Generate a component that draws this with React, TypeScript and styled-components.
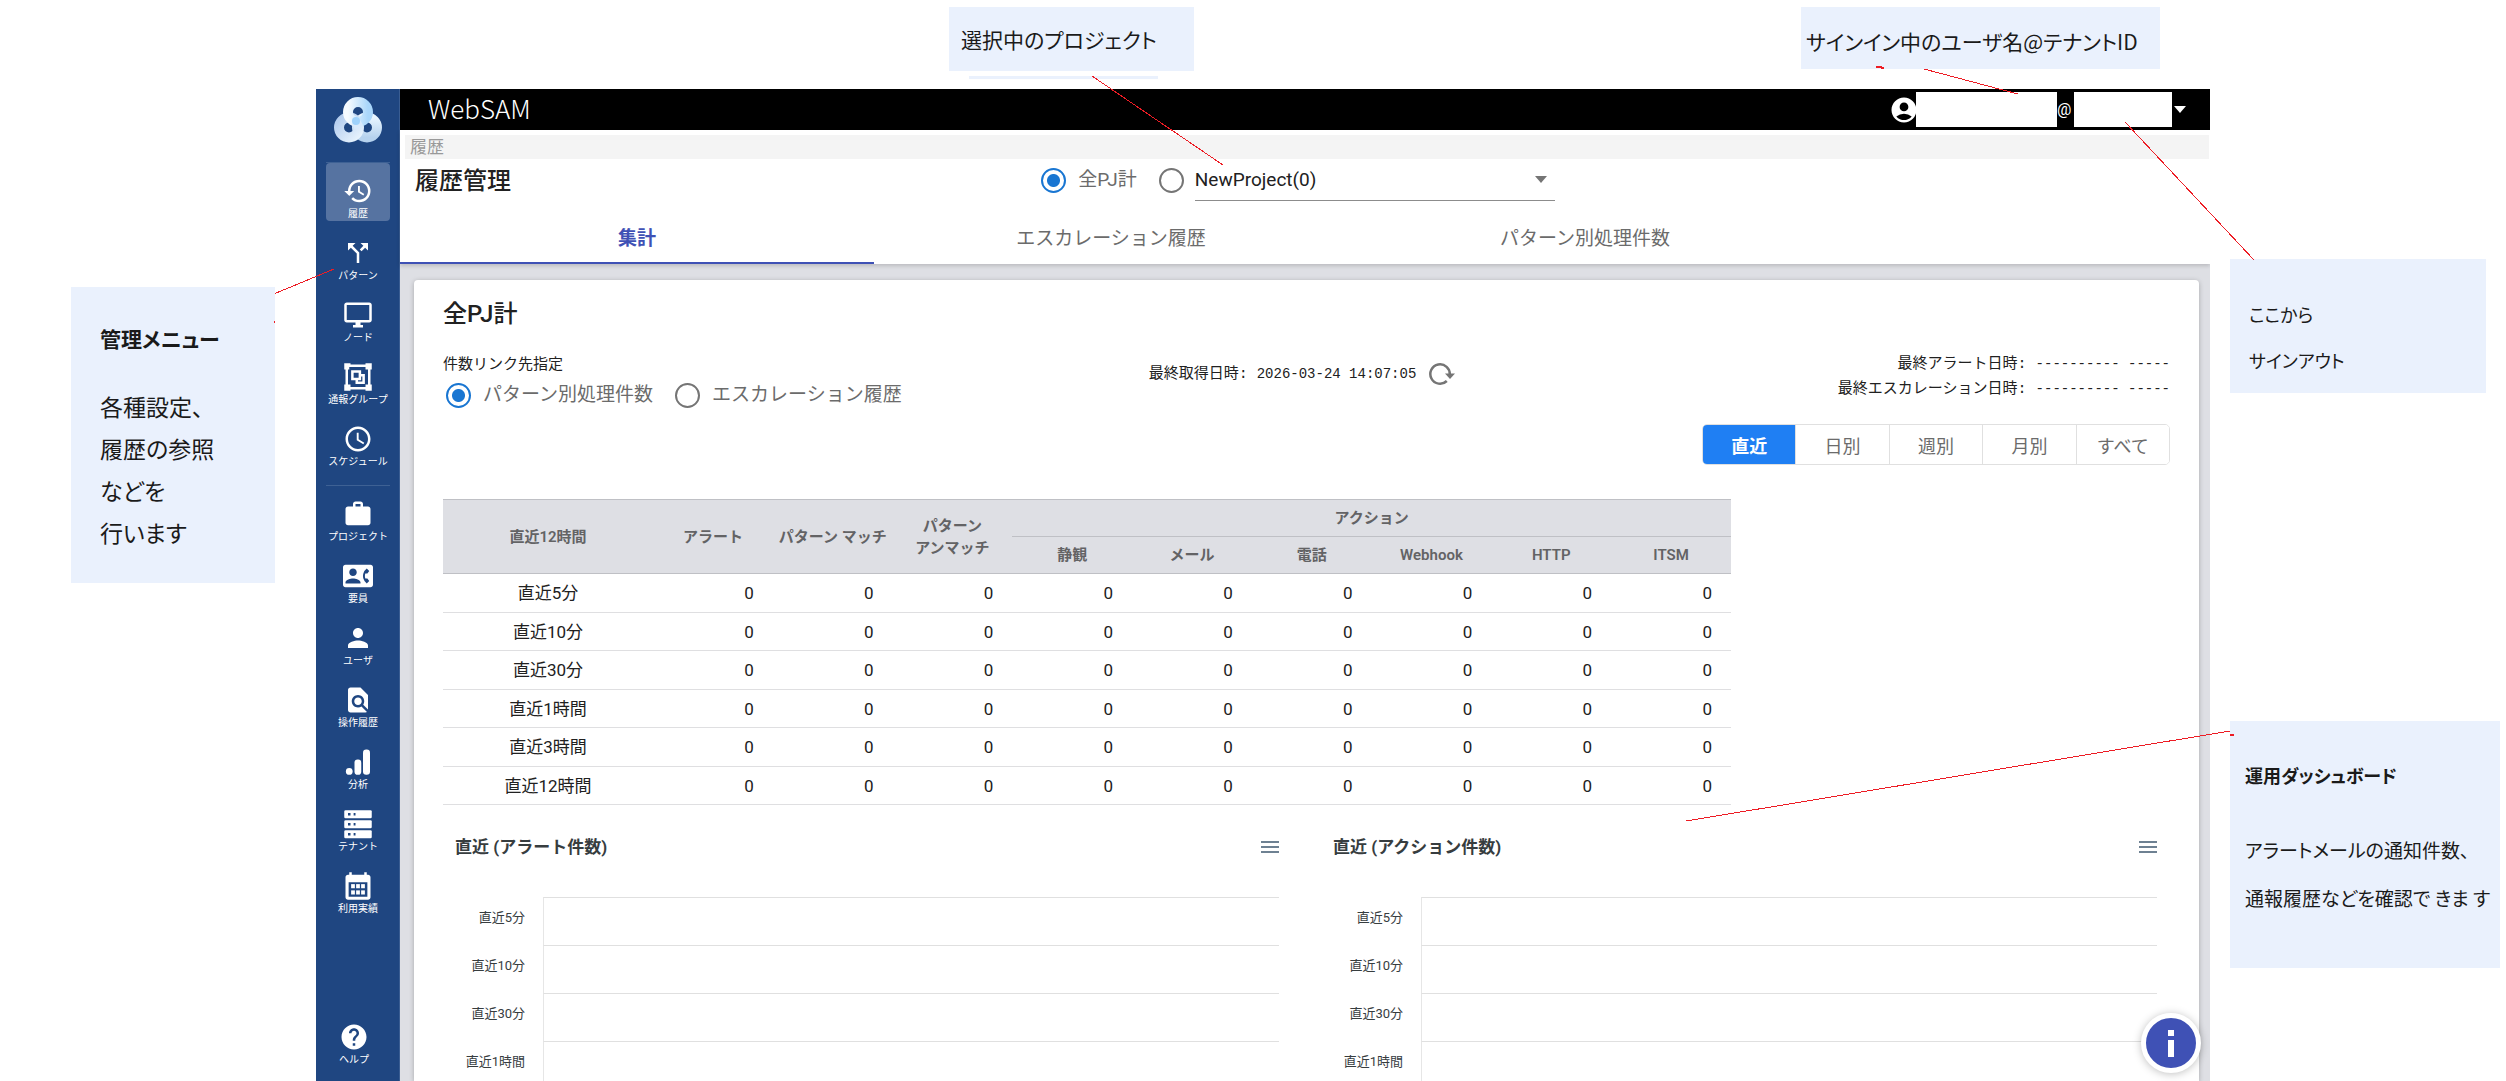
import React, { useState } from 'react';
import styled, { createGlobalStyle, css } from 'styled-components';
import {
  MdAccessTime,
  MdAccountCircle,
  MdCallSplit,
  MdContactPhone,
  MdFindInPage,
  MdHelp,
  MdHistory,
  MdOutlineDesktopWindows,
  MdPerson,
  MdWork,
} from 'react-icons/md';

const sans = "Roboto, 'Noto Sans CJK JP', sans-serif";
const mono = "'Liberation Mono', 'Noto Sans CJK JP', monospace";
const notes = "'Noto Sans CJK JP', sans-serif";

const color = {
  navy: '#1f4681',
  indigo: '#3f51b5',
  blue: '#1976d2',
  toggle: '#1f7ff3',
  panel: '#dedfe4',
  text: '#212121',
  muted: '#6b6b6b',
  note: '#eaf1fd',
  red: '#ed1c24',
};

const GlobalStyle = createGlobalStyle`
  *, *::before, *::after { box-sizing: border-box; }
  body { margin: 0; background: #fff; color: ${color.text}; font-family: ${sans}; }
  button, select, input { font-family: inherit; margin: 0; }
  h1, h2, h3, p, fieldset, ul { margin: 0; padding: 0; border: 0; }
`;

/* ---------- page frame and notes ---------- */

const Page = styled.div`
  position: relative;
  display: grid;
  grid-template-columns: 316px minmax(0, 1fr) 296px;
  grid-template-rows: 89px minmax(0, 1fr);
  height: 100vh;
  overflow: hidden;
`;

const TopNotes = styled.div`
  grid-column: 2 / 4;
  display: flex;
  align-items: flex-start;
  gap: 607px;
  padding: 7px 0 0 633px;
`;

const LeftNotes = styled.aside`
  padding: 198px 0 0 71px;
`;

const RightNotes = styled.aside`
  display: flex;
  flex-direction: column;
  gap: 328px;
  padding: 170px 0 0 20px;
`;

const Note = styled.section<{ $w: number; $h: number; $pad: string; $size?: number; $line?: number }>`
  flex: none;
  width: ${(p) => p.$w}px;
  height: ${(p) => p.$h}px;
  padding: ${(p) => p.$pad};
  background: ${color.note};
  color: #1a1a1a;
  font-family: ${notes};
  font-size: ${(p) => p.$size ?? 21}px;
  line-height: ${(p) => p.$line ?? 42}px;
  font-feature-settings: 'palt';
  white-space: nowrap;
`;

const NoteTitle = styled.h2<{ $gap: number; $size: number }>`
  margin-bottom: ${(p) => p.$gap}px;
  font-size: ${(p) => p.$size}px;
  font-weight: 700;
`;

const Connectors = styled.svg`
  position: absolute;
  inset: 0;
  width: 100%;
  height: 100%;
  pointer-events: none;
`;

/* ---------- application shell ---------- */

const Shell = styled.div`
  position: relative;
  display: grid;
  grid-template-columns: 84px minmax(0, 1fr);
  min-height: 0;
  overflow: hidden;
`;

const Sidebar = styled.nav`
  display: flex;
  flex-direction: column;
  padding: 0 9px 14px 10px;
  background: ${color.navy};
  border-right: 1px solid #3a5d92;
`;

const LogoBox = styled.div`
  height: 73px;
  padding-top: 7px;
  text-align: center;
`;

const Rule = styled.hr<{ $top?: number }>`
  width: 100%;
  height: 1px;
  margin: ${(p) => p.$top ?? 0}px 0 0;
  border: 0;
  background: #3e6194;
`;

const NavList = styled.ul`
  display: grid;
  gap: 4px;
  list-style: none;
`;

const NavButton = styled.button<{ $active?: boolean }>`
  display: flex;
  flex-direction: column;
  align-items: center;
  width: 100%;
  height: 58px;
  padding: 13px 0 0;
  border: 0;
  border-radius: 4px;
  background: ${(p) => (p.$active ? '#5673a1' : 'transparent')};
  color: #fff;
  font-size: 10px;
  line-height: 15px;
  white-space: nowrap;
  cursor: pointer;
`;

const HelpSlot = styled.div`
  margin-top: auto;
  padding-right: 8px;
`;

const Main = styled.div`
  display: flex;
  flex-direction: column;
  min-height: 0;
`;

const TopBar = styled.header`
  flex: none;
  display: flex;
  align-items: center;
  justify-content: space-between;
  height: 41px;
  padding: 0 24px 0 28px;
  background: #000;
  color: #fff;
`;

const Brand = styled.div`
  padding-bottom: 4px;
  font-family: ${notes};
  font-size: 26px;
  font-weight: 300;
  line-height: 36px;
`;

const UserButton = styled.button`
  display: flex;
  align-items: center;
  padding: 0;
  border: 0;
  background: none;
  color: #fff;
  font-size: 16px;
  cursor: pointer;
`;

const Blank = styled.span<{ $w: number }>`
  width: ${(p) => p.$w}px;
  height: 35px;
  background: #fff;
  svg + & { margin-left: -3px; }
`;

const At = styled.span`
  width: 17px;
  text-align: left;
`;

const Caret = styled.span`
  margin-left: 2px;
  border: 6px solid transparent;
  border-top: 7px solid currentColor;
  border-bottom: 0;
`;

const PageHead = styled.div`
  position: relative;
  flex: none;
  padding-top: 5px;
  background: #fff;
  box-shadow: 0 2px 4px rgba(0, 0, 0, 0.16);
`;

const Crumbs = styled.nav`
  margin: 0 1px 0 5px;
  padding-left: 5px;
  background: #f4f4f4;
  color: #999;
  font-size: 17px;
  line-height: 24px;
`;

const TitleRow = styled.div`
  display: grid;
  grid-template-columns: 1fr auto 1fr;
  align-items: center;
  height: 44px;
  padding: 0 15px;
`;

const PageTitle = styled.h1`
  font-size: 24px;
  font-weight: 500;
  line-height: 40px;
`;

const Scope = styled.fieldset`
  display: flex;
  align-items: center;
  align-self: start;
  padding-right: 14px;
`;

const RadioLabel = styled.label`
  display: flex;
  align-items: center;
  gap: 12px;
  margin-right: 22px;
  color: ${color.muted};
  font-size: 19px;
  line-height: 38px;
  white-space: nowrap;
`;

const Radio = styled.input.attrs({ type: 'radio' })`
  appearance: none;
  flex: none;
  width: 25px;
  height: 25px;
  border: 2px solid #757575;
  border-radius: 50%;
  &:checked {
    border-color: ${color.blue};
    background: radial-gradient(circle, ${color.blue} 6px, transparent 7px);
  }
`;

const SelectBox = styled.div`
  position: relative;
  width: 360px;
  margin-left: 11px;
  color: #757575;
  border-bottom: 1px solid #8c8c8c;
`;

const Select = styled.select`
  appearance: none;
  display: block;
  width: 100%;
  height: 41px;
  padding: 0;
  border: 0;
  background: none;
  color: ${color.text};
  font-size: 19px;
`;

const SelectCaret = styled(Caret)`
  position: absolute;
  top: 17px;
  right: 8px;
  pointer-events: none;
`;

const Tabs = styled.div`
  display: grid;
  grid-template-columns: repeat(3, minmax(0, 474px));
  margin-top: 8px;
`;

const Tab = styled.button<{ $active: boolean }>`
  height: 53px;
  padding: 0;
  border: 0;
  border-bottom: 2px solid ${(p) => (p.$active ? color.indigo : 'transparent')};
  background: none;
  color: ${(p) => (p.$active ? color.indigo : color.muted)};
  font-size: 19px;
  font-weight: ${(p) => (p.$active ? 700 : 400)};
  cursor: pointer;
`;

const Content = styled.main`
  flex: 1;
  min-height: 0;
  padding: 16px 11px 0 14px;
  background: ${color.panel};
`;

const Card = styled.section`
  height: 100%;
  padding: 18px 0 0 29px;
  overflow: hidden;
  border-radius: 4px 4px 0 0;
  background: #fff;
  box-shadow: 0 1px 5px rgba(0, 0, 0, 0.25);
`;

const Summary = styled.div`
  padding-right: 29px;
`;

const CardTitle = styled.h2`
  margin-bottom: 22px;
  font-size: 24px;
  font-weight: 500;
  line-height: 32px;
`;

const InfoRow = styled.div`
  display: grid;
  grid-template-columns: 1fr auto 1fr;
  align-items: start;
  font-size: 15px;
  line-height: 24px;
`;

const LinkTarget = styled.fieldset`
  min-width: 0;
  legend { padding: 0; }
`;

const RadioRow = styled.div`
  display: flex;
  padding-left: 3px;
`;

const Fetched = styled.div`
  display: flex;
  align-items: center;
  gap: 12px;
  height: 44px;
  padding-right: 8px;
  font-family: ${mono};
`;

const Stamp = styled.time`
  font-size: 14px;
`;

const LastTimes = styled.div`
  text-align: right;
  font-family: ${mono};
`;

const IconButton = styled.button`
  display: flex;
  padding: 0;
  border: 0;
  background: none;
  color: #757575;
  cursor: pointer;
`;

const Toggle = styled.div`
  display: flex;
  width: 468px;
  height: 41px;
  margin: 10px 0 0 auto;
  overflow: hidden;
  border: 1px solid #e0e0e0;
  border-radius: 5px;
`;

const ToggleButton = styled.button<{ $active: boolean }>`
  flex: 1;
  padding: 0;
  border: 0;
  border-left: 1px solid #e0e0e0;
  background: #fff;
  color: ${color.muted};
  font-size: 18px;
  cursor: pointer;
  &:first-child { border-left: 0; }
  ${(p) =>
    p.$active &&
    css`
      background: ${color.toggle};
      color: #fff;
      font-weight: 700;
    `}
`;

/* ---------- table ---------- */

const Table = styled.table`
  width: 1288px;
  max-width: 100%;
  margin-top: 34px;
  border-collapse: collapse;
  table-layout: fixed;
  font-size: 17px;
  line-height: 22px;
`;

const HeadCell = styled.th`
  height: 37px;
  padding: 0;
  border-top: 1px solid #bfc0c5;
  border-bottom: 1px solid #bfc0c5;
  background: ${color.panel};
  color: #636365;
  font-size: 15px;
  font-weight: 600;
`;

const BodyRow = styled.tr`
  height: 38px;
  border-bottom: 1px solid #dfdfe1;
  &:nth-child(odd) { height: 39px; }
`;

const RowHead = styled.th`
  padding: 0;
  font-weight: 400;
`;

const Num = styled.td`
  padding: 0 19px 0 0;
  text-align: right;
`;

/* ---------- charts ---------- */

const Charts = styled.div`
  display: grid;
  grid-template-columns: 1fr 1fr;
  margin-top: 30px;
`;

const ChartBox = styled.section`
  padding: 0 42px 0 12px;
`;

const ChartHead = styled.div`
  display: flex;
  align-items: center;
  justify-content: space-between;
  margin-bottom: 38px;
`;

const ChartTitle = styled.h3`
  color: #373d3f;
  font-size: 17px;
  font-weight: 700;
  line-height: 24px;
`;

const ChartRow = styled.div`
  display: grid;
  grid-template-columns: 70px 1fr;
  gap: 18px;
  height: 48px;
  color: #373d3f;
  font-size: 13px;
  line-height: 42px;
  text-align: right;
`;

const Band = styled.div`
  border-top: 1px solid #e0e0e0;
  border-left: 1px solid #e6e6e6;
`;

const InfoButton = styled.button`
  position: absolute;
  right: 9px;
  bottom: 8px;
  display: grid;
  place-items: center;
  width: 60px;
  height: 60px;
  padding: 0;
  border: 5px solid #fff;
  border-radius: 50%;
  background: ${color.indigo};
  box-shadow: 0 1px 8px rgba(0, 0, 0, 0.25);
  cursor: pointer;
`;

/* ---------- drawings ---------- */

const Logo = () => (
  <svg width="48" height="48" viewBox="0 0 48 48" fill="none" role="img" aria-label="WebSAM">
    <defs>
      <linearGradient id="lgA" x1="0" y1="0" x2="1" y2="1">
        <stop offset="0" stopColor="#b4cdee" />
        <stop offset="1" stopColor="#e6f2fd" />
      </linearGradient>
      <linearGradient id="lgB" x1="0" y1="0" x2="0" y2="1">
        <stop offset="0" stopColor="#e8f5ff" />
        <stop offset="1" stopColor="#b6d2ee" />
      </linearGradient>
      <linearGradient id="lgC" x1="0" y1="0" x2="1" y2="0">
        <stop offset="0" stopColor="#f6fbff" />
        <stop offset="1" stopColor="#a9d6fa" />
      </linearGradient>
    </defs>
    <circle cx="33" cy="31.500" r="10" stroke="url(#lgB)" strokeWidth="10" />
    <circle cx="15" cy="31.500" r="10" stroke="url(#lgA)" strokeWidth="10" />
    <circle cx="24" cy="16" r="10" stroke="url(#lgC)" strokeWidth="10" />
    <path d="M19.500 25 A10 10 0 0 1 25 32" stroke="#d9eafb" strokeWidth="9" />
    <circle cx="22" cy="25" r="4" fill="#9fd2fb" />
  </svg>
);

const GroupIcon = () => (
  <svg width="30" height="30" viewBox="0 0 24 24" fill="currentColor">
    <path
      fillRule="evenodd"
      d="M1 1h5v1h12V1h5v5h-1v12h1v5h-5v-1H6v1H1v-5h1V6H1V1zm4 3v2H4v12h2v2h12v-2h2V6h-2V4H5z"
    />
    <path fillRule="evenodd" d="M6.500 6.500h8v3h3v8H10v-3H6.500v-8zm2 2v4h4v-4h-4zm6 3v3H12v1h3.500v-4h-1z" />
  </svg>
);

const AnalyticsIcon = () => (
  <svg width="30" height="30" viewBox="0 0 24 24" fill="currentColor">
    <circle cx="5" cy="19.500" r="2.700" />
    <rect x="9.200" y="10" width="5.400" height="12.200" rx="2.500" />
    <rect x="16" y="2" width="5.600" height="20.200" rx="2.600" />
  </svg>
);

const ServerIcon = () => (
  <svg width="30" height="30" viewBox="0 0 24 24" fill="currentColor">
    {[1, 9, 17].map((y) => (
      <React.Fragment key={y}>
        <rect x="1" y={y} width="22" height="6.300" rx="1" />
        <rect x="4" y={y + 2.2} width="2" height="2" fill={color.navy} />
        <rect x="8.500" y={y + 2.2} width="1.500" height="2" fill={color.navy} />
      </React.Fragment>
    ))}
  </svg>
);

const CalendarIcon = () => (
  <svg width="30" height="30" viewBox="0 0 24 24" fill="currentColor">
    <path
      fillRule="evenodd"
      d="M5 1h2v2h10V1h2v2h1c1.100 0 2 .9 2 2v16c0 1.100-.9 2-2 2H4c-1.100 0-2-.9-2-2V5c0-1.100.9-2 2-2h1V1zM4.500 9v11.500h15V9h-15z"
    />
    {[10.5, 15.5].map((y) =>
      [6.5, 10.5, 14.5].map((x) => <rect key={`${x}-${y}`} x={x} y={y} width="3" height="3.300" />),
    )}
  </svg>
);

const RefreshIcon = () => (
  <svg width="28" height="26" viewBox="0 0 28 26" fill="none" stroke="currentColor" strokeWidth="2.500">
    <path d="M21.700 14 A9.700 9.700 0 1 0 18.800 20" />
    <path d="M17 12.500 h10 l-5 5.500 z" fill="currentColor" stroke="none" />
  </svg>
);

const MenuIcon = () => (
  <svg width="18" height="14" viewBox="0 0 18 14" fill="#6e8192">
    <rect y="1" width="18" height="2" />
    <rect y="6" width="18" height="2" />
    <rect y="11" width="18" height="2" />
  </svg>
);

const InfoMark = () => (
  <svg width="6" height="27" viewBox="0 0 6 27" fill="#fff">
    <rect width="6" height="6" />
    <rect y="10" width="6" height="17" />
  </svg>
);

/* ---------- data ---------- */

const mainNav = [
  { label: '履歴', icon: <MdHistory size={30} /> },
  { label: 'パターン', icon: <MdCallSplit size={30} /> },
  { label: 'ノード', icon: <MdOutlineDesktopWindows size={30} /> },
  { label: '通報グループ', icon: <GroupIcon /> },
  { label: 'スケジュール', icon: <MdAccessTime size={30} /> },
];

const adminNav = [
  { label: 'プロジェクト', icon: <MdWork size={30} /> },
  { label: '要員', icon: <MdContactPhone size={30} /> },
  { label: 'ユーザ', icon: <MdPerson size={30} /> },
  { label: '操作履歴', icon: <MdFindInPage size={30} /> },
  { label: '分析', icon: <AnalyticsIcon /> },
  { label: 'テナント', icon: <ServerIcon /> },
  { label: '利用実績', icon: <CalendarIcon /> },
];

const tabs = ['集計', 'エスカレーション履歴', 'パターン別処理件数'];
const spans = ['直近', '日別', '週別', '月別', 'すべて'];
const actions = ['静観', 'メール', '電話', 'Webhook', 'HTTP', 'ITSM'];
const periods = ['直近5分', '直近10分', '直近30分', '直近1時間', '直近3時間', '直近12時間'];

const NavGroup = ({ items, active }: { items: typeof mainNav; active?: string }) => (
  <NavList>
    {items.map((item) => (
      <li key={item.label}>
        <NavButton type="button" $active={item.label === active}>
          {item.icon}
          {item.label}
        </NavButton>
      </li>
    ))}
  </NavList>
);

const Chart = ({ title }: { title: string }) => (
  <ChartBox>
    <ChartHead>
      <ChartTitle>{title}</ChartTitle>
      <IconButton type="button" aria-label="メニュー">
        <MenuIcon />
      </IconButton>
    </ChartHead>
    {periods.slice(0, 4).map((p) => (
      <ChartRow key={p}>
        {p}
        <Band />
      </ChartRow>
    ))}
  </ChartBox>
);

export default function App() {
  const [tab, setTab] = useState(tabs[0]);
  const [span, setSpan] = useState(spans[0]);

  return (
    <Page>
      <GlobalStyle />
      <TopNotes>
        <Note $w={245} $h={64} $pad="12px" $line={40}>
          選択中のプロジェクト
        </Note>
        <Note $w={359} $h={62} $pad="14px 5px" $line={40}>
          サインイン中のユーザ名@テナントID
        </Note>
      </TopNotes>

      <LeftNotes>
        <Note $w={204} $h={296} $pad="30px 0 0 29px" $size={23}>
          <NoteTitle $gap={26} $size={21}>
            管理メニュー
          </NoteTitle>
          <p>各種設定、</p>
          <p>履歴の参照</p>
          <p>などを</p>
          <p>行います</p>
        </Note>
      </LeftNotes>

      <Shell>
        <Sidebar>
          <LogoBox>
            <Logo />
          </LogoBox>
          <Rule />
          <NavGroup items={mainNav} active="履歴" />
          <Rule $top={16} />
          <NavGroup items={adminNav} />
          <HelpSlot>
            <NavButton type="button">
              <MdHelp size={30} />
              ヘルプ
            </NavButton>
          </HelpSlot>
        </Sidebar>

        <Main>
          <TopBar>
            <Brand>WebSAM</Brand>
            <UserButton type="button" aria-label="ユーザメニュー">
              <MdAccountCircle size={30} />
              <Blank $w={141} />
              <At>@</At>
              <Blank $w={98} />
              <Caret />
            </UserButton>
          </TopBar>

          <PageHead>
            <Crumbs>履歴</Crumbs>
            <TitleRow>
              <PageTitle>履歴管理</PageTitle>
              <Scope>
                <RadioLabel>
                  <Radio name="scope" defaultChecked />
                  全PJ計
                </RadioLabel>
                <Radio name="scope" aria-label="プロジェクト" />
                <SelectBox>
                  <Select aria-label="プロジェクト">
                    <option>NewProject(0)</option>
                  </Select>
                  <SelectCaret />
                </SelectBox>
              </Scope>
            </TitleRow>
            <Tabs role="tablist">
              {tabs.map((t) => (
                <Tab key={t} type="button" role="tab" aria-selected={t === tab} $active={t === tab} onClick={() => setTab(t)}>
                  {t}
                </Tab>
              ))}
            </Tabs>
          </PageHead>

          <Content>
            <Card>
              <Summary>
                <CardTitle>全PJ計</CardTitle>
                <InfoRow>
                  <LinkTarget>
                    <legend>件数リンク先指定</legend>
                    <RadioRow>
                      <RadioLabel>
                        <Radio name="target" defaultChecked />
                        パターン別処理件数
                      </RadioLabel>
                      <RadioLabel>
                        <Radio name="target" />
                        エスカレーション履歴
                      </RadioLabel>
                    </RadioRow>
                  </LinkTarget>
                  <Fetched>
                    <span>
                      最終取得日時: <Stamp>2026-03-24 14:07:05</Stamp>
                    </span>
                    <IconButton type="button" aria-label="更新">
                      <RefreshIcon />
                    </IconButton>
                  </Fetched>
                  <LastTimes>
                    <p>
                      最終アラート日時: <Stamp>---------- -----</Stamp>
                    </p>
                    <p>
                      最終エスカレーション日時: <Stamp>---------- -----</Stamp>
                    </p>
                  </LastTimes>
                </InfoRow>
                <Toggle role="group">
                  {spans.map((s) => (
                    <ToggleButton key={s} type="button" $active={s === span} onClick={() => setSpan(s)}>
                      {s}
                    </ToggleButton>
                  ))}
                </Toggle>
                <Table>
                  <colgroup>
                    <col style={{ width: 210 }} />
                    <col span={9} />
                  </colgroup>
                  <thead>
                    <tr>
                      <HeadCell rowSpan={2}>直近12時間</HeadCell>
                      <HeadCell rowSpan={2}>アラート</HeadCell>
                      <HeadCell rowSpan={2}>パターン マッチ</HeadCell>
                      <HeadCell rowSpan={2}>
                        パターン
                        <br />
                        アンマッチ
                      </HeadCell>
                      <HeadCell colSpan={6}>アクション</HeadCell>
                    </tr>
                    <tr>
                      {actions.map((a) => (
                        <HeadCell key={a}>{a}</HeadCell>
                      ))}
                    </tr>
                  </thead>
                  <tbody>
                    {periods.map((p) => (
                      <BodyRow key={p}>
                        <RowHead scope="row">{p}</RowHead>
                        {Array.from({ length: 9 }, (_, i) => (
                          <Num key={i}>0</Num>
                        ))}
                      </BodyRow>
                    ))}
                  </tbody>
                </Table>
              </Summary>
              <Charts>
                <Chart title="直近 (アラート件数)" />
                <Chart title="直近 (アクション件数)" />
              </Charts>
            </Card>
          </Content>
        </Main>

        <InfoButton type="button" aria-label="情報">
          <InfoMark />
        </InfoButton>
      </Shell>

      <RightNotes>
        <Note $w={256} $h={134} $pad="32px 0 0 19px" $size={18} $line={46}>
          <p>ここから</p>
          <p>サインアウト</p>
        </Note>
        <Note $w={270} $h={247} $pad="30px 0 0 15px" $size={19} $line={48}>
          <NoteTitle $gap={27} $size={18}>
            運用ダッシュボード
          </NoteTitle>
          <p>アラートメールの通知件数、</p>
          <p>通報履歴などを確認で きま す</p>
        </Note>
      </RightNotes>

      <Connectors aria-hidden="true" stroke={color.red} shapeRendering="crispEdges">
        <path d="M969 77.500H1158" stroke={color.note} strokeWidth="3" />
        <path d="M275 293.500L334 269M1092 76L1223 165M1924 69L2018 94M2125 122L2254 260M1686 821L2230 731" />
        <path d="M274 322h1M1876 67h3l5 1M2230 735h4" strokeWidth="2" />
      </Connectors>
    </Page>
  );
}
